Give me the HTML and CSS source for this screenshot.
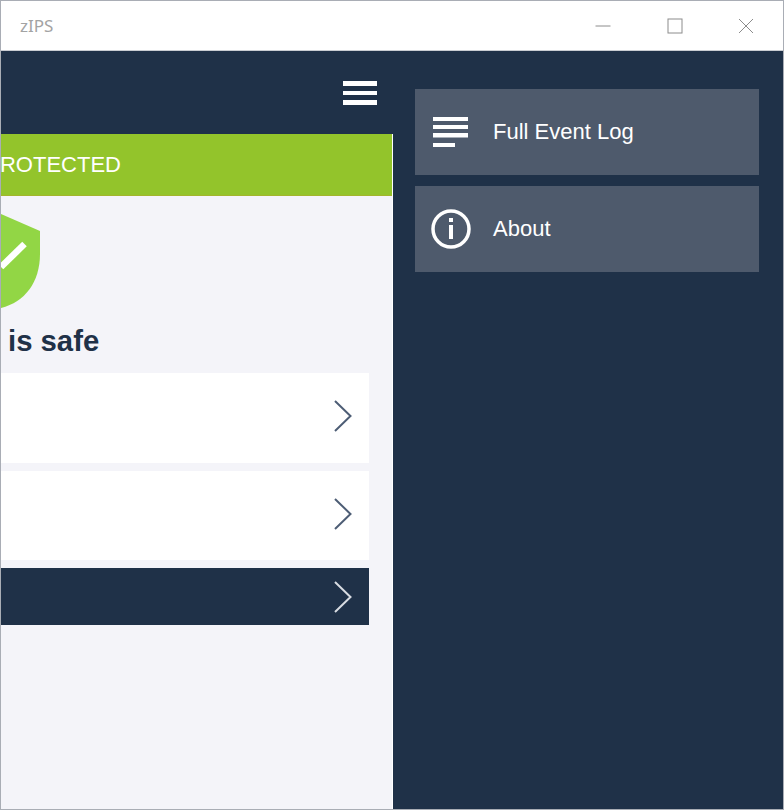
FILE: index.html
```html
<!DOCTYPE html>
<html lang="en">
<head>
    <meta charset="UTF-8">
    <meta name="viewport" content="width=device-width, initial-scale=1.0">
    <title>zIPS</title>
    <link rel="stylesheet" href="styles.css">
</head>
<body>
    <div class="window">
        <div class="titlebar">
            <span class="app-name">zIPS</span>
            <div class="controls">
                <div class="control">
                    <svg width="16" height="16" viewBox="0 0 16 16"><path d="M0.5 8H15.5" stroke="#8c8c8c" fill="none"/></svg>
                </div>
                <div class="control">
                    <svg width="16" height="16" viewBox="0 0 16 16"><rect x="1" y="1" width="14" height="14" stroke="#8c8c8c" fill="none"/></svg>
                </div>
                <div class="control">
                    <svg width="16" height="16" viewBox="0 0 16 16"><path d="M1 1L15 15M15 1L1 15" stroke="#8c8c8c" fill="none"/></svg>
                </div>
            </div>
        </div>

        <div class="content">
            <div class="main">
                <div class="topbar">
                    <div class="hamburger"><span></span><span></span><span></span></div>
                </div>
                <div class="main-body">
                    <div class="banner"><span>PROTECTED</span></div>
                    <div class="status">
                        <svg class="shield" width="40" height="96" viewBox="0 0 40 96">
                            <path d="M0 0L39 17V40C39 68 24 88 0 94Z" fill="#92d645"/>
                            <path d="M23.500 30L0 53" stroke="#fff" stroke-width="6.500" fill="none"/>
                        </svg>
                        <h2 class="status-text">is safe</h2>
                    </div>
                    <div class="cards">
                        <div class="card">
                            <svg width="18" height="32" viewBox="0 0 18 32"><path d="M1 1L16.500 16L1 31" stroke="#4d5d75" stroke-width="2" fill="none"/></svg>
                        </div>
                        <div class="card">
                            <svg width="18" height="32" viewBox="0 0 18 32"><path d="M1 1L16.500 16L1 31" stroke="#4d5d75" stroke-width="2" fill="none"/></svg>
                        </div>
                        <div class="card card-dark">
                            <svg width="18" height="32" viewBox="0 0 18 32"><path d="M1 1L16.500 16L1 31" stroke="#d8dce2" stroke-width="2" fill="none"/></svg>
                        </div>
                    </div>
                </div>
            </div>

            <div class="menu">
                <div class="menu-item">
                    <svg class="menu-icon" width="40" height="40" viewBox="0 0 40 40" fill="#fff">
                        <rect x="2" y="5" width="35" height="4"/>
                        <rect x="2" y="13" width="35" height="4"/>
                        <rect x="2" y="21" width="35" height="4.500"/>
                        <rect x="2" y="31" width="22" height="4"/>
                    </svg>
                    <span>Full Event Log</span>
                </div>
                <div class="menu-item">
                    <svg class="menu-icon" width="40" height="40" viewBox="0 0 40 40">
                        <circle cx="20" cy="20" r="18" stroke="#fff" stroke-width="3.500" fill="none"/>
                        <rect x="18" y="9" width="4" height="4" fill="#fff"/>
                        <rect x="18" y="16" width="4" height="14" fill="#fff"/>
                    </svg>
                    <span>About</span>
                </div>
            </div>
        </div>
    </div>
</body>
</html>
```

FILE: styles.css
```css
/* General Styles */
* {
    box-sizing: border-box;
}

body {
    margin: 0;
    font-family: "Liberation Sans", Arial, sans-serif;
}

.window {
    width: 784px;
    height: 810px;
    border: 1px solid #a9adb5;
    display: flex;
    flex-direction: column;
    overflow: hidden;
}

/* Title bar */
.titlebar {
    height: 50px;
    flex: none;
    background-color: #ffffff;
    border-bottom: 1px solid #c9ccd2;
    display: flex;
    align-items: center;
    justify-content: space-between;
    padding-left: 19px;
}

.app-name {
    font-family: "Noto Sans", sans-serif;
    font-size: 17px;
    color: #a3a3a3;
}

.controls {
    display: flex;
    padding-right: 1px;
}

.control {
    width: 71.500px;
    height: 49px;
    display: flex;
    align-items: center;
    justify-content: center;
}

/* Content */
.content {
    flex: 1;
    display: flex;
    min-height: 0;
}

.main {
    width: 392px;
    flex: none;
    display: flex;
    flex-direction: column;
}

.topbar {
    height: 83px;
    flex: none;
    background-color: #1f3148;
    padding: 30px 16px 0 0;
    display: flex;
    justify-content: flex-end;
}

.hamburger {
    width: 34px;
    display: flex;
    flex-direction: column;
    gap: 5px;
}

.hamburger span {
    display: block;
    height: 4.500px;
    background-color: #ffffff;
}

.main-body {
    flex: 1;
    background-color: #f4f4f9;
    border-right: 1px solid #ffffff;
}

.banner {
    height: 62px;
    background-color: #93c42b;
    border-bottom: 1px solid #a3b52c;
    color: #ffffff;
    font-size: 22px;
    display: flex;
    align-items: center;
    justify-content: flex-end;
    padding-right: 271px;
    overflow: hidden;
}

.status {
    padding-top: 18px;
}

.shield {
    display: block;
}

.status-text {
    margin: 15px 0 0 7px;
    font-size: 29.300px;
    line-height: 32px;
    color: #1f3148;
}

.cards {
    margin: 16px 23px 0 0;
    display: flex;
    flex-direction: column;
    gap: 8px;
}

.card {
    height: 89.500px;
    background-color: #ffffff;
    display: flex;
    align-items: center;
    justify-content: flex-end;
    padding: 0 17px 3px 0;
}

.card-dark {
    height: 57px;
    padding-bottom: 0;
    background-color: #1f3148;
}

/* Side menu */
.menu {
    flex: 1;
    background-color: #1f3148;
    padding: 38px 24px 0 22px;
    display: flex;
    flex-direction: column;
    gap: 11px;
}

.menu-item {
    height: 86px;
    background-color: #4e5a6c;
    color: #ffffff;
    font-size: 22px;
    display: flex;
    align-items: center;
}

.menu-icon {
    flex: none;
    margin: 0 22px 0 16px;
}
```
